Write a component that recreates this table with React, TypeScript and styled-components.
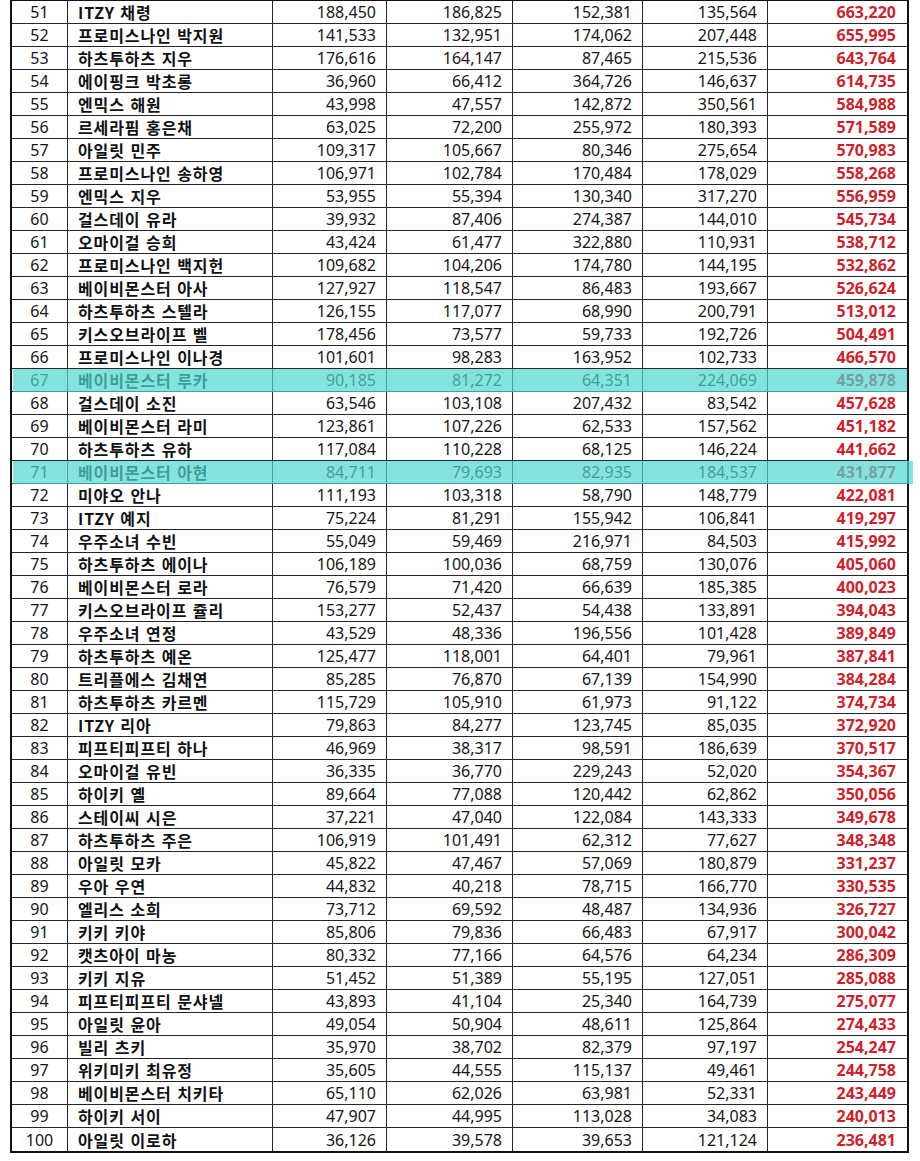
import styled, { createGlobalStyle, css } from "styled-components";

const GlobalStyle = createGlobalStyle`
  html, body {
    margin: 0;
    padding: 0;
    background: #ffffff;
  }
`;

type Row = [number, string, number, number, number, number, number];

const rows: Row[] = [
  [51, "ITZY 채령", 188450, 186825, 152381, 135564, 663220],
  [52, "프로미스나인 박지원", 141533, 132951, 174062, 207448, 655995],
  [53, "하츠투하츠 지우", 176616, 164147, 87465, 215536, 643764],
  [54, "에이핑크 박초롱", 36960, 66412, 364726, 146637, 614735],
  [55, "엔믹스 해원", 43998, 47557, 142872, 350561, 584988],
  [56, "르세라핌 홍은채", 63025, 72200, 255972, 180393, 571589],
  [57, "아일릿 민주", 109317, 105667, 80346, 275654, 570983],
  [58, "프로미스나인 송하영", 106971, 102784, 170484, 178029, 558268],
  [59, "엔믹스 지우", 53955, 55394, 130340, 317270, 556959],
  [60, "걸스데이 유라", 39932, 87406, 274387, 144010, 545734],
  [61, "오마이걸 승희", 43424, 61477, 322880, 110931, 538712],
  [62, "프로미스나인 백지헌", 109682, 104206, 174780, 144195, 532862],
  [63, "베이비몬스터 아사", 127927, 118547, 86483, 193667, 526624],
  [64, "하츠투하츠 스텔라", 126155, 117077, 68990, 200791, 513012],
  [65, "키스오브라이프 벨", 178456, 73577, 59733, 192726, 504491],
  [66, "프로미스나인 이나경", 101601, 98283, 163952, 102733, 466570],
  [67, "베이비몬스터 루카", 90185, 81272, 64351, 224069, 459878],
  [68, "걸스데이 소진", 63546, 103108, 207432, 83542, 457628],
  [69, "베이비몬스터 라미", 123861, 107226, 62533, 157562, 451182],
  [70, "하츠투하츠 유하", 117084, 110228, 68125, 146224, 441662],
  [71, "베이비몬스터 아현", 84711, 79693, 82935, 184537, 431877],
  [72, "미야오 안나", 111193, 103318, 58790, 148779, 422081],
  [73, "ITZY 예지", 75224, 81291, 155942, 106841, 419297],
  [74, "우주소녀 수빈", 55049, 59469, 216971, 84503, 415992],
  [75, "하츠투하츠 에이나", 106189, 100036, 68759, 130076, 405060],
  [76, "베이비몬스터 로라", 76579, 71420, 66639, 185385, 400023],
  [77, "키스오브라이프 쥴리", 153277, 52437, 54438, 133891, 394043],
  [78, "우주소녀 연정", 43529, 48336, 196556, 101428, 389849],
  [79, "하츠투하츠 예온", 125477, 118001, 64401, 79961, 387841],
  [80, "트리플에스 김채연", 85285, 76870, 67139, 154990, 384284],
  [81, "하츠투하츠 카르멘", 115729, 105910, 61973, 91122, 374734],
  [82, "ITZY 리아", 79863, 84277, 123745, 85035, 372920],
  [83, "피프티피프티 하나", 46969, 38317, 98591, 186639, 370517],
  [84, "오마이걸 유빈", 36335, 36770, 229243, 52020, 354367],
  [85, "하이키 옐", 89664, 77088, 120442, 62862, 350056],
  [86, "스테이씨 시은", 37221, 47040, 122084, 143333, 349678],
  [87, "하츠투하츠 주은", 106919, 101491, 62312, 77627, 348348],
  [88, "아일릿 모카", 45822, 47467, 57069, 180879, 331237],
  [89, "우아 우연", 44832, 40218, 78715, 166770, 330535],
  [90, "엘리스 소희", 73712, 69592, 48487, 134936, 326727],
  [91, "키키 키야", 85806, 79836, 66483, 67917, 300042],
  [92, "캣츠아이 마농", 80332, 77166, 64576, 64234, 286309],
  [93, "키키 지유", 51452, 51389, 55195, 127051, 285088],
  [94, "피프티피프티 문샤넬", 43893, 41104, 25340, 164739, 275077],
  [95, "아일릿 윤아", 49054, 50904, 48611, 125864, 274433],
  [96, "빌리 츠키", 35970, 38702, 82379, 97197, 254247],
  [97, "위키미키 최유정", 35605, 44555, 115137, 49461, 244758],
  [98, "베이비몬스터 치키타", 65110, 62026, 63981, 52331, 243449],
  [99, "하이키 서이", 47907, 44995, 113028, 34083, 240013],
  [100, "아일릿 이로하", 36126, 39578, 39653, 121124, 236481],
];

// rank -> how far the marker runs past the right border
const marked: Record<number, number> = { 67: 0, 71: 6 };

const Sheet = styled.div`
  width: 899px;
  margin-left: 10px;
  border: 2px solid #111;
  border-top-width: 1px;
  box-sizing: border-box;
  font-family: "Noto Sans", "Noto Sans CJK KR", sans-serif;
  font-size: 16px;
  color: #161616;
`;

const RowLine = styled.div<{ $mark?: number }>`
  position: relative;
  display: grid;
  grid-template-columns: 56px 205px 114px 126px 130px 125px 139px;
  height: 23px;
  box-sizing: border-box;
  border-bottom: 1px solid #262626;

  &:last-child {
    border-bottom: none;
  }

  ${(p) =>
    p.$mark !== undefined &&
    css`
      &::after {
        content: "";
        position: absolute;
        left: 1px;
        top: 0;
        bottom: -1px;
        right: ${-p.$mark}px;
        background: rgba(80, 215, 208, 0.7);
        pointer-events: none;
      }
    `}
`;

const Cell = styled.div<{ $align?: "left" | "center" | "right" }>`
  display: flex;
  align-items: center;
  justify-content: ${(p) =>
    p.$align === "left" ? "flex-start" : p.$align === "center" ? "center" : "flex-end"};
  padding: ${(p) => (p.$align === "left" ? "0 0 0 10px" : p.$align === "center" ? "0" : "0 10px 0 0")};
  border-right: 1px solid #262626;
  box-sizing: border-box;
  line-height: 1;
  white-space: nowrap;
  overflow: hidden;

  &:last-child {
    border-right: none;
  }
`;

const Name = styled(Cell)`
  font-family: "Noto Sans CJK KR", sans-serif;
  font-weight: 700;
  font-size: 16px;
  letter-spacing: 0.9px;
  word-spacing: 1px;
  color: #111;
`;

const Total = styled(Cell)`
  font-weight: 700;
  color: #d11f2b;
  padding-right: 11px;
`;

const fmt = (n: number) => n.toLocaleString("en-US");

function App() {
  return (
    <>
      <GlobalStyle />
      <Sheet>
        {rows.map(([rank, name, a, b, c, d, total]) => (
          <RowLine key={rank} $mark={marked[rank]}>
            <Cell $align="center">{rank}</Cell>
            <Name $align="left">{name}</Name>
            <Cell>{fmt(a)}</Cell>
            <Cell>{fmt(b)}</Cell>
            <Cell>{fmt(c)}</Cell>
            <Cell>{fmt(d)}</Cell>
            <Total>{fmt(total)}</Total>
          </RowLine>
        ))}
      </Sheet>
    </>
  );
}

export default App;
